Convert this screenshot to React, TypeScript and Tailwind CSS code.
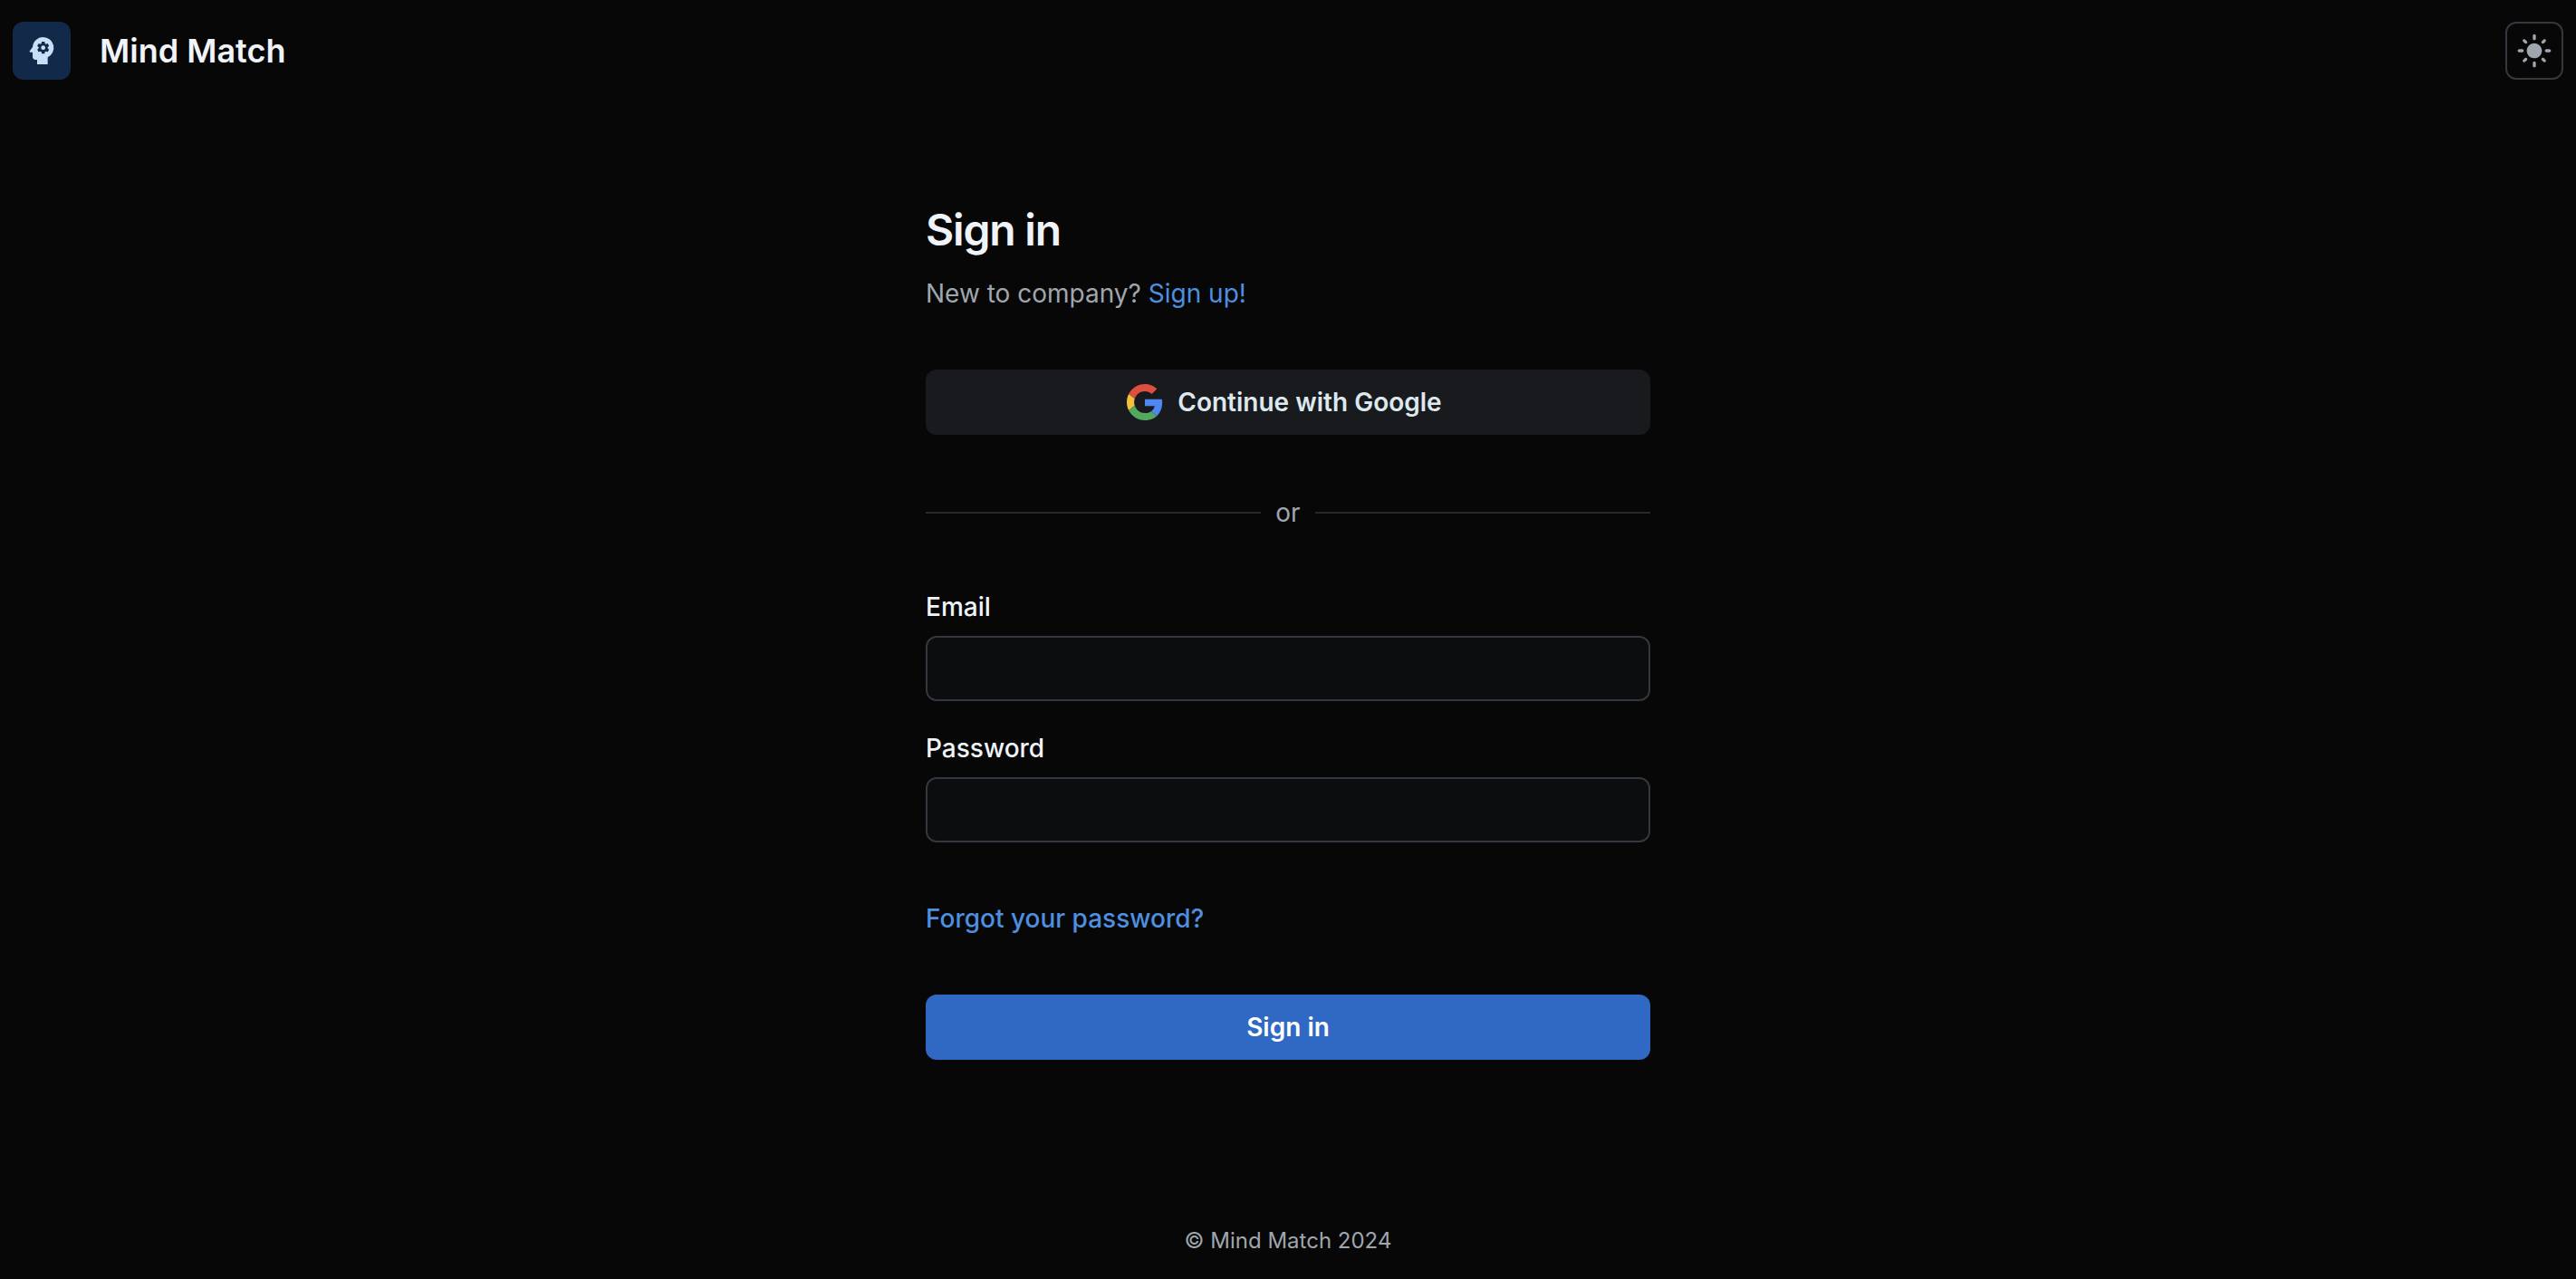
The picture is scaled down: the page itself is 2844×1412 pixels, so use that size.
import { MdPsychology } from "react-icons/md";

function Sun() {
  return (
    <svg viewBox="0 0 24 24" className="w-10 h-10" fill="#9FA6AD">
      <path d="M12 7c-2.76 0-5 2.24-5 5s2.24 5 5 5 5-2.24 5-5-2.24-5-5-5zM2 13h2c.55 0 1-.45 1-1s-.45-1-1-1H2c-.55 0-1 .45-1 1s.45 1 1 1zm18 0h2c.55 0 1-.45 1-1s-.45-1-1-1h-2c-.55 0-1 .45-1 1s.45 1 1 1zM11 2v2c0 .55.45 1 1 1s1-.45 1-1V2c0-.55-.45-1-1-1s-1 .45-1 1zm0 18v2c0 .55.45 1 1 1s1-.45 1-1v-2c0-.55-.45-1-1-1s-1 .45-1 1zM5.99 4.58c-.39-.39-1.03-.39-1.41 0-.39.39-.39 1.03 0 1.41l1.06 1.06c.39.39 1.03.39 1.41 0s.39-1.03 0-1.41L5.99 4.58zm12.37 12.37c-.39-.39-1.03-.39-1.41 0-.39.39-.39 1.03 0 1.41l1.06 1.06c.39.39 1.03.39 1.41 0 .39-.39.39-1.03 0-1.41l-1.06-1.06zm1.06-10.96c.39-.39.39-1.03 0-1.41-.39-.39-1.03-.39-1.41 0l-1.06 1.06c-.39.39-.39 1.03 0 1.41s1.03.39 1.41 0l1.06-1.06zM7.05 18.36c.39-.39.39-1.03 0-1.41-.39-.39-1.03-.39-1.41 0l-1.06 1.06c-.39.39-.39 1.03 0 1.41s1.03.39 1.41 0l1.06-1.06z" />
    </svg>
  );
}

function Google() {
  return (
    <svg viewBox="0 0 48 48" className="w-10 h-10">
      <path fill="#DD4F3E" d="M24 9.5c3.54 0 6.71 1.22 9.21 3.6l6.85-6.85C35.9 2.38 30.47 0 24 0 14.62 0 6.51 5.38 2.56 13.22l7.98 6.19C12.43 13.72 17.74 9.5 24 9.5z" />
      <path fill="#4F87F0" d="M46.98 24.55c0-1.57-.15-3.09-.38-4.55H24v9.02h12.94c-.58 2.96-2.26 5.48-4.78 7.18l7.73 6c4.51-4.18 7.09-10.36 7.09-17.65z" />
      <path fill="#F4BE3F" d="M10.53 28.59c-.48-1.45-.76-2.99-.76-4.59s.27-3.14.76-4.59l-7.98-6.19C.92 16.46 0 20.12 0 24c0 3.88.92 7.54 2.56 10.78l7.97-6.19z" />
      <path fill="#52A85D" d="M24 48c6.48 0 11.93-2.13 15.89-5.81l-7.73-6c-2.15 1.45-4.92 2.3-8.16 2.3-6.26 0-11.57-4.22-13.47-9.91l-7.98 6.19C6.51 42.62 14.62 48 24 48z" />
    </svg>
  );
}

function Field({ label, type }: { label: string; type: string }) {
  return (
    <div className="flex flex-col">
      <label className="text-[28px] leading-[40px] font-medium text-[#F0F4F8] mb-3">{label}</label>
      <input
        type={type}
        className="h-[72px] w-full rounded-xl border-2 border-[#32383E] bg-[#0B0D0E] px-5 text-[32px] text-[#F0F4F8] outline-none"
      />
    </div>
  );
}

export default function App() {
  return (
    <div className="h-screen flex flex-col bg-[#070708] overflow-hidden font-['Inter',sans-serif]">
      <header className="h-[112px] shrink-0 flex items-center justify-between px-[14px]">
        <div className="flex items-center gap-8">
          <div className="w-16 h-16 rounded-xl bg-[#12294A] flex items-center justify-center text-[#C7DFF7]">
            <MdPsychology size={40} />
          </div>
          <span className="text-[36px] leading-[48px] font-semibold text-[#F0F4F8]">Mind Match</span>
        </div>
        <button className="w-16 h-16 rounded-xl border-2 border-[#32383E] flex items-center justify-center">
          <Sun />
        </button>
      </header>

      <main className="flex-1 w-[800px] mx-auto flex flex-col pt-[110px]">
        <h1 className="text-[48px] leading-[64px] font-semibold tracking-[-0.025em] text-[#F0F4F8]">Sign in</h1>
        <p className="mt-[18px] text-[28px] leading-[40px] text-[#9FA6AD]">
          New to company? <a className="text-[#4E8FE0]">Sign up!</a>
        </p>

        <button className="mt-[64px] h-[72px] rounded-xl bg-[#181A1D] flex items-center justify-center gap-4 pr-2 text-[28px] font-semibold text-[#DDE7EE]">
          <Google />
          Continue with Google
        </button>

        <div className="mt-[66px] h-10 flex items-center gap-4 text-[28px] text-[#9FA6AD]">
          <div className="flex-1 h-0.5 bg-[#25282C]" />
          or
          <div className="flex-1 h-0.5 bg-[#25282C]" />
        </div>

        <div className="mt-[64px] flex flex-col gap-[32px]">
          <Field label="Email" type="email" />
          <Field label="Password" type="password" />
        </div>

        <a className="mt-[64px] text-[28px] leading-[40px] font-medium text-[#4E8FE0]">Forgot your password?</a>

        <button className="mt-[64px] h-[72px] rounded-xl bg-[#2F69C4] text-[28px] font-semibold text-white">Sign in</button>
      </main>

      <footer className="h-[62px] shrink-0 text-center text-[24px] leading-[40px] text-[#9FA6AD]">© Mind Match 2024</footer>
    </div>
  );
}
